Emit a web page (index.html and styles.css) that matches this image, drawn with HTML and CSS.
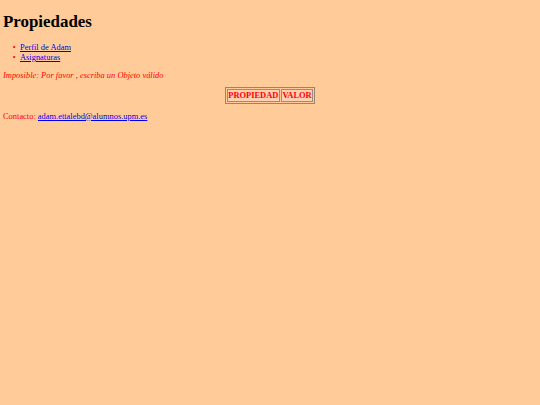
FILE: index.html
```html
<!DOCTYPE html>
<html lang="es">
<head>
<meta charset="utf-8">
<title>Propiedades</title>
<link rel="stylesheet" href="styles.css">
</head>
<body>
<h1 class="title">Propiedades</h1>
<ul class="menu">
<li><a href="#">Perfil de Adam</a></li>
<li><a href="#">Asignaturas</a></li>
</ul>
<p class="error">Imposible: Por favor , escriba un Objeto válido</p>
<table class="props">
<tr><th>PROPIEDAD</th><th>VALOR</th></tr>
</table>
<p class="contact">Contacto: <a href="#">adam.ettalebd@alumnos.upm.es</a></p>
</body>
</html>
```
FILE: styles.css
```css
html {
  background: #ffcc99;
}
body {
  margin: 3px;
  font-family: "Liberation Serif", "Times New Roman", serif;
  font-size: 8.44px;
  color: #000;
  background: #ffcc99;
}
.title {
  font-size: 16.9px;
  font-weight: bold;
  margin: 9px 0 10px;
}
.menu {
  margin: 8.44px 0;
  padding-left: 17px;
  color: #ff0000;
}
.menu li::marker {
  content: "\2022\2002";
}
a {
  color: #0000ee;
}
.error {
  margin: 8.44px 0 6.44px;
  color: #ff0000;
  font-style: italic;
}
.props {
  margin: 0 auto;
  border: 1px solid #9a8470;
  border-spacing: 1px;
  background: #ffcc99;
}
.props th {
  border: 1px solid #a08a78;
  padding: 0.5px;
  color: #ff0000;
  font-weight: bold;
  background: #ffd0b4;
}
.contact {
  margin: 7px 0;
  color: #ff0000;
}
```
